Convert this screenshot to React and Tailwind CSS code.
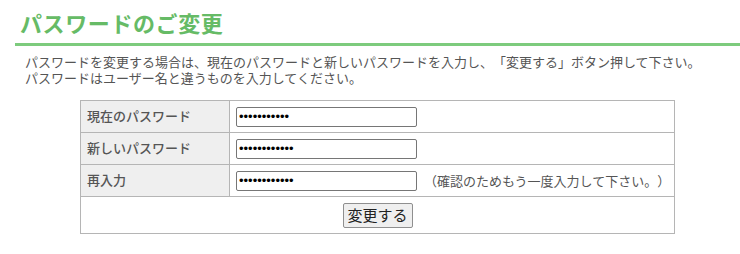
export default function App() {
  const font = { fontFamily: '"Noto Sans CJK JP", "Noto Sans", sans-serif' };
  return (
    <div className="w-[740px] h-[254px] bg-white overflow-hidden [text-spacing-trim:space-all]" style={font}>
      <div className="pl-[15px] pt-[7px]">
        <h1 className="pl-[5px] text-[22px] leading-[30px] font-bold text-[#66bb66] tracking-[0.6px]">パスワードのご変更</h1>
        <div className="mt-[6px] h-[3px] bg-[#7dcb7d]" />
      </div>
      <div className="pl-[25px] pt-[8px] text-[13px] leading-[16px] text-[#555]">
        <p>パスワードを変更する場合は、現在のパスワードと新しいパスワードを入力し、「変更する」ボタン押して下さい。</p>
        <p>パスワードはユーザー名と違うものを入力してください。</p>
      </div>
      <div className="pl-[80px] pt-[14px]">
        <table className="w-[595px] border-collapse text-[13px] text-[#555]">
          <tbody>
            {[
              ["現在のパスワード", "•••••••••••", false],
              ["新しいパスワード", "••••••••••••", false],
              ["再入力", "••••••••••••", true],
            ].map(([label, val, hint]) => (
              <tr key={label} className="h-[32px]">
                <td className="w-[149px] border border-[#b5b5b5] bg-[#efefef] pl-[6px] align-middle font-medium leading-[16px] pb-[2px]">{label}</td>
                <td className="border border-[#b5b5b5] pl-[6px] align-middle">
                  <div className="flex items-center">
                    <input
                      type="password"
                      readOnly
                      value={val}
                      className="w-[181px] h-[20px] border border-[#767676] rounded-[2px] px-[2px] text-[13px] text-black outline-none"
                      style={{ fontFamily: '"Liberation Sans", sans-serif' }}
                    />
                    {hint && <span className="ml-[7px] text-[13px] text-[#555]">（確認のためもう一度入力して下さい。）</span>}
                  </div>
                </td>
              </tr>
            ))}
            <tr className="h-[37px]">
              <td colSpan={2} className="border border-[#b5b5b5] text-center align-middle">
                <button className="w-[70px] h-[25px] border border-[#8f8f8f] rounded-[2px] bg-[#efefef] text-[15px] leading-[20px] text-[#222]">変更する</button>
              </td>
            </tr>
          </tbody>
        </table>
      </div>
    </div>
  );
}
